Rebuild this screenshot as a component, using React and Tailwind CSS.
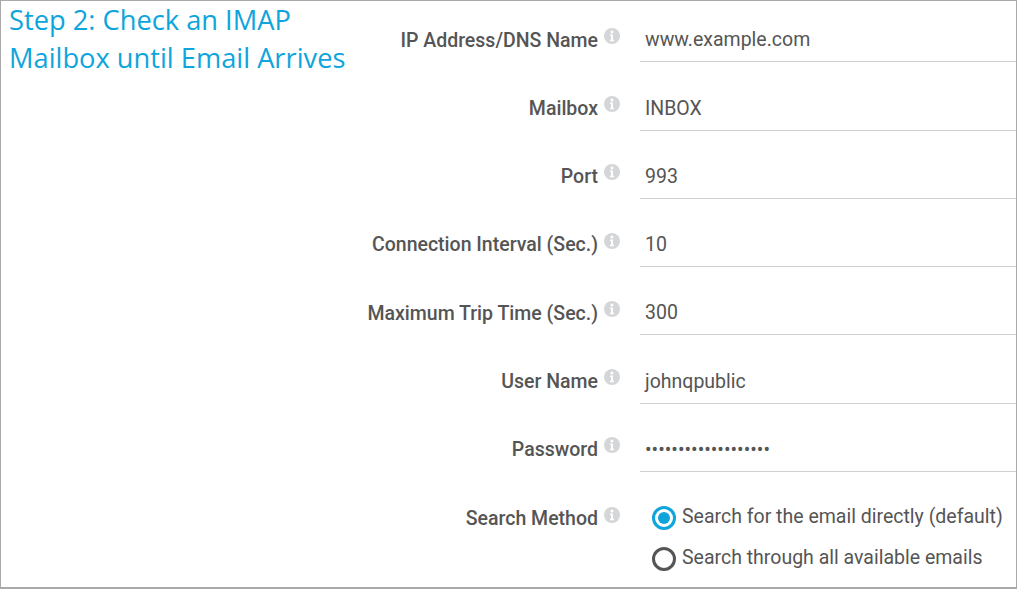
import React from "react";

const fields = [
  { label: "IP Address/DNS Name", value: "www.example.com" },
  { label: "Mailbox", value: "INBOX" },
  { label: "Port", value: "993" },
  { label: "Connection Interval (Sec.)", value: "10" },
  { label: "Maximum Trip Time (Sec.)", value: "300" },
  { label: "User Name", value: "johnqpublic" },
  { label: "Password", value: "•••••••••••••••••••" },
];

function InfoIcon() {
  return (
    <svg width="16" height="16" viewBox="0 0 16 16" className="shrink-0 ml-[6px] mt-[-9px]">
      <circle cx="8" cy="8" r="8" fill="#d4d6d8" />
      <circle cx="8" cy="4" r="1.5" fill="#fff" />
      <path d="M6 6.6h3v5.2h1.1v1.4H5.9v-1.4H7V8H6z" fill="#fff" />
    </svg>
  );
}

function Radio({ checked, children }) {
  return (
    <div className="flex items-center h-[41px]">
      <span
        className={
          "w-[24px] h-[24px] rounded-full border-[3px] bg-white flex items-center justify-center shrink-0 " +
          (checked ? "border-[#0ea5dc]" : "border-[#555]")
        }
      >
        {checked && <span className="w-[12px] h-[12px] rounded-full bg-[#0ea5dc]" />}
      </span>
      <span className="ml-[6px] pb-[2px] text-[19.5px] text-[#555] whitespace-nowrap">{children}</span>
    </div>
  );
}

export default function App() {
  return (
    <div className="w-[1017px] h-[589px] bg-white border border-b-2 border-[#a9a9a9] flex overflow-hidden font-['Roboto',sans-serif]">
      <h2 className="w-[290px] shrink-0 pl-[8px] text-[27.25px] leading-[38px] font-normal text-[#0ea5dc] font-['Open_Sans',sans-serif] whitespace-nowrap">
        Step 2: Check an IMAP
        <br />
        Mailbox until Email Arrives
      </h2>
      <div className="flex-1 min-w-0 flex flex-col">
        {fields.map((f, i) => (
          <div key={f.label} className={"flex " + (i === 0 ? "h-[61.25px]" : "h-[68.25px]")}>
            <div className="w-[349px] h-[30px] self-end mb-[7px] flex justify-end items-center shrink-0 pr-[20px]">
              <span className="text-[19.5px] font-medium text-[#555]">{f.label}</span>
              <InfoIcon />
            </div>
            <div className="flex-1 border-b border-[#d0d0d0] pl-[5px] pb-[6px] flex items-end text-[19.5px] leading-[30px] text-[#555]">
              {f.value}
            </div>
          </div>
        ))}
        <div className="flex mt-[25.75px]">
          <div className="w-[349px] h-[43px] flex justify-end items-center shrink-0 pr-[20px]">
            <span className="text-[19.5px] font-medium text-[#555]">Search Method</span>
            <InfoIcon />
          </div>
          <div className="pl-[12px] flex flex-col">
            <Radio checked>Search for the email directly (default)</Radio>
            <Radio>Search through all available emails</Radio>
          </div>
        </div>
      </div>
    </div>
  );
}
